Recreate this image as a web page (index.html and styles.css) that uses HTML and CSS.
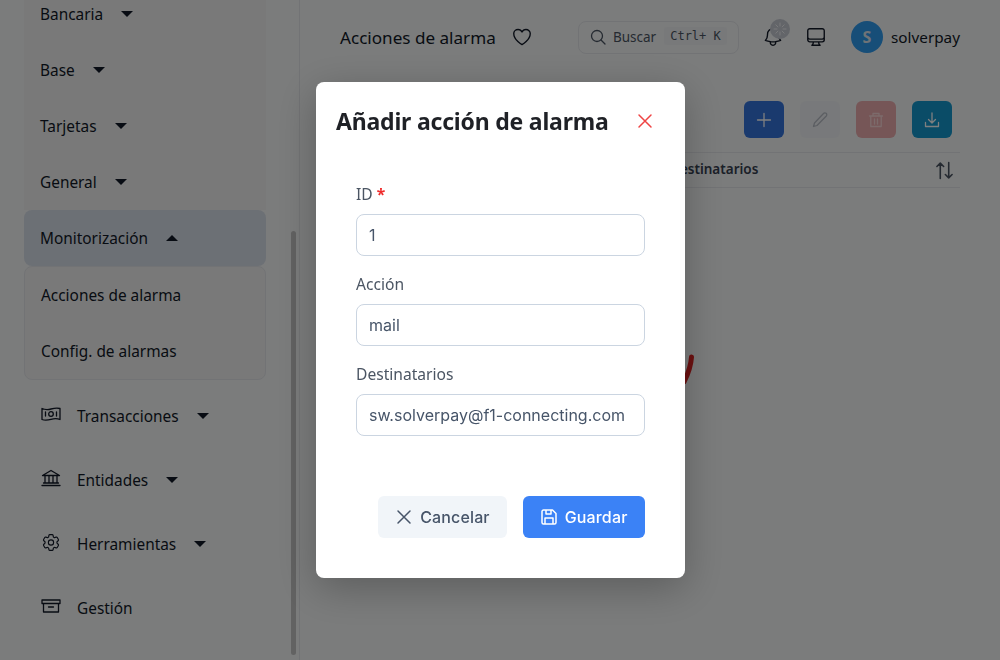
FILE: index.html
```html
<!DOCTYPE html>
<html lang="es">

<head>
    <meta charset="UTF-8">
    <meta name="viewport" content="width=device-width, initial-scale=1.0">
    <title>Acciones de alarma</title>
    <link rel="stylesheet" href="styles.css">
</head>

<body>
    <div class="app">
        <aside class="sidebar">
            <nav class="menu">
                <div class="menu-item"><span>Bancaria</span><i class="caret"></i></div>
                <div class="menu-item"><span>Base</span><i class="caret"></i></div>
                <div class="menu-item"><span>Tarjetas</span><i class="caret"></i></div>
                <div class="menu-item"><span>General</span><i class="caret"></i></div>
                <div class="menu-item active"><span>Monitorización</span><i class="caret up"></i></div>
                <div class="submenu">
                    <div class="submenu-item">Acciones de alarma</div>
                    <div class="submenu-item">Config. de alarmas</div>
                </div>
                <div class="menu-item big">
                    <svg class="menu-icon" viewBox="0 0 20 14">
                        <path d="M1 1.500c3 1.300 6 1.300 9 .5s6-1.300 9-.5v11c-3-1.300-6-1-9-.2s-6 1.200-9 .2z" />
                        <circle cx="10" cy="7" r="2.300" />
                        <path d="M4.500 5v4M15.500 5v4" />
                    </svg>
                    <span>Transacciones</span><i class="caret"></i>
                </div>
                <div class="menu-item big">
                    <svg class="menu-icon" viewBox="0 0 20 17">
                        <path d="M1.500 6 10 1l8.500 5zM4 6.500v7M8 6.500v7M12 6.500v7M16 6.500v7M2.500 13.500h15M1 16h18" />
                    </svg>
                    <span>Entidades</span><i class="caret"></i>
                </div>
                <div class="menu-item big">
                    <svg class="menu-icon gear" viewBox="0 0 24 24">
                        <path d="M9.594 3.940c.090-.542.560-.940 1.110-.940h2.593c.550 0 1.020.398 1.110.940l.213 1.281c.063.374.313.686.645.870.074.040.147.083.220.127.325.196.720.257 1.075.124l1.217-.456a1.125 1.125 0 0 1 1.370.490l1.296 2.247a1.125 1.125 0 0 1-.260 1.431l-1.003.827c-.293.241-.438.613-.430.992a7.723 7.723 0 0 1 0 .255c-.008.378.137.750.430.991l1.004.827c.424.350.534.955.260 1.430l-1.298 2.247a1.125 1.125 0 0 1-1.369.491l-1.217-.456c-.355-.133-.750-.072-1.076.124a6.470 6.470 0 0 1-.220.128c-.331.183-.581.495-.644.869l-.213 1.281c-.090.543-.560.940-1.110.940h-2.594c-.550 0-1.019-.398-1.110-.940l-.213-1.281c-.062-.374-.312-.686-.644-.870a6.520 6.520 0 0 1-.220-.127c-.325-.196-.720-.257-1.076-.124l-1.217.456a1.125 1.125 0 0 1-1.369-.490l-1.297-2.247a1.125 1.125 0 0 1 .260-1.431l1.004-.827c.292-.240.437-.613.430-.991a6.932 6.932 0 0 1 0-.255c.007-.380-.138-.751-.430-.992l-1.004-.827a1.125 1.125 0 0 1-.260-1.430l1.297-2.247a1.125 1.125 0 0 1 1.370-.491l1.216.456c.356.133.751.072 1.076-.124.072-.044.146-.086.220-.128.332-.183.582-.495.644-.869l.214-1.280Z" />
                        <circle cx="12" cy="12" r="3" />
                    </svg>
                    <span>Herramientas</span><i class="caret"></i>
                </div>
                <div class="menu-item big">
                    <svg class="menu-icon" viewBox="0 0 20 14">
                        <path d="M1 1h18v3.500H1zM2.500 4.500V13h15V4.500M7.500 8h5" />
                    </svg>
                    <span>Gestión</span>
                </div>
            </nav>
            <div class="scroll-thumb"></div>
        </aside>

        <main class="main">
            <header class="topbar">
                <div class="page-title">
                    <span>Acciones de alarma</span>
                    <svg class="heart" viewBox="0 0 24 24">
                        <path d="M21 8.250c0-2.485-2.099-4.500-4.688-4.500-1.935 0-3.597 1.126-4.312 2.733-.715-1.607-2.377-2.733-4.313-2.733C5.100 3.750 3 5.765 3 8.250c0 7.220 9 12 9 12s9-4.780 9-12Z" />
                    </svg>
                </div>
                <div class="search">
                    <svg class="search-icon" viewBox="0 0 16 16">
                        <circle cx="7" cy="7" r="5.500" />
                        <path d="m11 11 4 4" />
                    </svg>
                    <span>Buscar</span>
                    <kbd>Ctrl+ K</kbd>
                </div>
                <div class="bell">
                    <svg viewBox="0 0 24 24">
                        <path d="M14.857 17.082a23.848 23.848 0 0 0 5.454-1.310A8.967 8.967 0 0 1 18 9.750V9A6 6 0 0 0 6 9v.750a8.967 8.967 0 0 1-2.312 6.022c1.733.640 3.560 1.085 5.455 1.310m5.714 0a24.255 24.255 0 0 1-5.714 0m5.714 0a3 3 0 1 1-5.714 0" />
                    </svg>
                    <div class="badge">
                        <svg viewBox="0 0 20 20">
                            <path d="M10 4v3M10 13v3M4 10h3M13 10h3M5.800 5.800 7.900 7.900M12.100 12.100l2.100 2.100M14.200 5.800l-2.100 2.100M7.900 12.100l-2.100 2.100" />
                        </svg>
                    </div>
                </div>
                <svg class="monitor" viewBox="0 0 24 24">
                    <path d="M9 17.250v1.007a3 3 0 0 1-.879 2.122L7.500 21h9l-.621-.621A3 3 0 0 1 15 18.257V17.250m6-12V15a2.250 2.250 0 0 1-2.250 2.250H5.250A2.250 2.250 0 0 1 3 15V5.250m18 0A2.250 2.250 0 0 0 18.750 3H5.250A2.250 2.250 0 0 0 3 5.250m18 0V12a2.250 2.250 0 0 1-2.250 2.250H5.250A2.250 2.250 0 0 1 3 12V5.250" />
                </svg>
                <div class="user">
                    <div class="avatar">S</div>
                    <span>solverpay</span>
                </div>
            </header>

            <div class="toolbar">
                <button class="tool tool-add">
                    <svg viewBox="0 0 20 20"><path d="M10 3.500v13M3.500 10h13" /></svg>
                </button>
                <button class="tool tool-edit">
                    <svg viewBox="0 0 20 20"><path d="M13.500 3.500a1.800 1.800 0 0 1 2.800 2.500L7 15.500l-3.500 1 1-3.500z" /></svg>
                </button>
                <button class="tool tool-delete">
                    <svg viewBox="0 0 20 20"><path d="M3.500 6h13M7 6V3.500h6V6M4.800 6v10.500h10.400V6M8.500 9v5M11.500 9v5" /></svg>
                </button>
                <button class="tool tool-export">
                    <svg viewBox="0 0 20 20"><path d="M10 3v9.500M6.500 9.500l3.500 3.500 3.500-3.500M3.500 12.500v4h13v-4" /></svg>
                </button>
            </div>

            <div class="table-head">
                <span>ID</span>
                <span>Acción</span>
                <span>Destinatarios</span>
                <svg class="sort" viewBox="0 0 18 18">
                    <path d="M5 16.500V2M1.800 5.200 5 2l3.200 3.200M13 1.500V16M9.800 12.800 13 16l3.200-3.200" />
                </svg>
            </div>

            <svg class="empty-mark" viewBox="0 0 12 30">
                <path d="M8.500 3C8 10 6 18 1 28" />
            </svg>
        </main>
    </div>

    <div class="overlay">
        <div class="modal">
            <div class="modal-header">
                <h2>Añadir acción de alarma</h2>
                <svg class="close" viewBox="0 0 16 16"><path d="m2 2 12 12M14 2 2 14" /></svg>
            </div>
            <form class="modal-form">
                <label for="alarmId">ID <b>*</b></label>
                <input type="text" id="alarmId" value="1">

                <label for="alarmAction">Acción</label>
                <input type="text" id="alarmAction" value="mail">

                <label for="alarmTo">Destinatarios</label>
                <input type="text" id="alarmTo" value="sw.solverpay@f1-connecting.com">

                <div class="modal-footer">
                    <button type="button" class="btn btn-cancel">
                        <svg viewBox="0 0 20 20"><path d="m4 4 12 12M16 4 4 16" /></svg>
                        Cancelar
                    </button>
                    <button type="button" class="btn btn-save">
                        <svg viewBox="0 0 20 20"><path d="M3 4.500A1.500 1.500 0 0 1 4.500 3h9L17 6.500v9a1.500 1.500 0 0 1-1.500 1.500h-11A1.500 1.500 0 0 1 3 15.500zM7 3v4h5V3M6 17v-6h8v6" /></svg>
                        Guardar
                    </button>
                </div>
            </form>
        </div>
    </div>
</body>

</html>
```

FILE: styles.css
```css
* {
    box-sizing: border-box;
}

body {
    margin: 0;
    height: 660px;
    overflow: hidden;
    font-family: "Noto Sans", sans-serif;
    font-size: 16px;
    color: #1f2937;
    background-color: #f6f8f8;
}

svg {
    fill: none;
    stroke: currentColor;
    stroke-linecap: round;
    stroke-linejoin: round;
}

.app {
    display: flex;
    height: 660px;
}

/* sidebar */
.sidebar {
    position: relative;
    flex: 0 0 300px;
    height: 660px;
    overflow: hidden;
    font-size: 15.4px;
    border-right: 1px solid #e5e7eb;
}

.menu {
    margin-top: -14px;
    padding: 0 33px 0 24px;
}

.menu-item {
    display: flex;
    align-items: center;
    height: 56px;
    padding-left: 16px;
    color: #111827;
    background-color: #f2f3f3;
}

.menu-item.active {
    background-color: #d9e0ea;
    border-radius: 8px;
}

.menu-item.big {
    height: 64px;
    padding-left: 17px;
    background-color: transparent;
}

.menu-item.big:nth-child(7) {
    margin-top: 4px;
}

.caret {
    width: 0;
    height: 0;
    margin-left: 18px;
    border-left: 6px solid transparent;
    border-right: 6px solid transparent;
    border-top: 6px solid #111827;
}

.caret.up {
    border-top: 0;
    border-bottom: 6px solid #111827;
}

.menu-icon {
    width: 20px;
    height: 20px;
    margin-right: 16px;
    margin-top: -4px;
    stroke-width: 1.300;
}

.menu-icon.gear {
    width: 21px;
    height: 21px;
    margin-right: 15px;
    transform: translateX(-0.5px);
}

.submenu {
    height: 114px;
    background-color: #f2f3f3;
    border: 1px solid #e5e7eb;
    border-radius: 8px;
}

.submenu-item {
    display: flex;
    align-items: center;
    height: 56px;
    padding-left: 16px;
    color: #111827;
}

.scroll-thumb {
    position: absolute;
    left: 291px;
    top: 231px;
    width: 5px;
    height: 424px;
    background-color: #c4c4c4;
    border-radius: 3px;
}

/* main area */
.main {
    position: relative;
    flex: 1;
    min-width: 0;
    padding-right: 40px;
}

.topbar {
    display: flex;
    align-items: center;
    height: 74px;
    padding-left: 40px;
}

.page-title {
    display: flex;
    align-items: center;
    width: 238px;
    font-size: 17.1px;
    color: #111827;
}

.heart {
    width: 22px;
    height: 22px;
    margin-left: 15px;
    stroke-width: 1.500;
}

.search {
    display: flex;
    align-items: center;
    width: 161px;
    height: 33px;
    padding-left: 11px;
    font-size: 13.5px;
    color: #4b5563;
    border: 1px solid #e5e7eb;
    border-radius: 8px;
}

.search-icon {
    width: 16px;
    height: 16px;
    margin-right: 7px;
    stroke-width: 1.300;
}

kbd {
    margin-top: -2px;
    margin-left: 8px;
    padding: 2px 6px;
    font-family: "DejaVu Sans Mono", monospace;
    font-size: 12px;
    color: #4b5563;
    background-color: #f1f3f5;
    border-radius: 3px;
}

.bell {
    position: relative;
    width: 22px;
    height: 22px;
    margin-left: 23px;
    color: #111827;
}

.bell > svg {
    display: block;
    width: 22px;
    height: 22px;
    stroke-width: 1.500;
}

.badge {
    position: absolute;
    top: -7px;
    left: 8px;
    width: 20px;
    height: 20px;
    background-color: #c6cad3;
    border-radius: 50%;
}

.badge svg {
    display: block;
    width: 20px;
    height: 20px;
    stroke: #f3f4f6;
}

.monitor {
    width: 22px;
    height: 22px;
    margin-top: -1px;
    margin-left: 21px;
    color: #111827;
    stroke-width: 1.500;
}

.user {
    display: flex;
    align-items: center;
    margin-left: 24px;
    font-size: 15.3px;
    color: #111827;
}

.avatar {
    display: flex;
    align-items: center;
    justify-content: center;
    width: 32px;
    height: 32px;
    margin-right: 8px;
    font-size: 16px;
    font-weight: 700;
    color: #dfe7ee;
    background-color: #2f9cf0;
    border-radius: 50%;
}

.toolbar {
    display: flex;
    justify-content: flex-end;
    gap: 16px;
    padding: 27px 8px 0 0;
}

.tool {
    display: flex;
    align-items: center;
    justify-content: center;
    width: 40px;
    height: 37px;
    padding: 0;
    border: none;
    border-radius: 6px;
    color: #fff;
}

.tool svg {
    width: 20px;
    height: 20px;
    stroke-width: 1.300;
}

.tool-add {
    background-color: #3574dd;
}

.tool-edit {
    color: #b8bdc6;
    background-color: #f1f3f6;
}

.tool-delete {
    color: #f9d6d7;
    background-color: #ecadaf;
}

.tool-export {
    background-color: #1498cf;
}

.table-head {
    display: grid;
    grid-template-columns: 165px 165px 1fr 26px;
    align-items: center;
    height: 36px;
    margin-top: 14px;
    margin-left: 40px;
    font-size: 13.5px;
    font-weight: 600;
    color: #374151;
    border-top: 1px solid #e5e7eb;
    border-bottom: 1px solid #e5e7eb;
}

.table-head span {
    padding-bottom: 2px;
}

.sort {
    width: 19px;
    height: 19px;
    stroke-width: 1.500;
    color: #4b5563;
    transform: translateX(1px);
}

/* piece of the red message that sticks out behind the modal */
.empty-mark {
    position: absolute;
    left: 383px;
    top: 354px;
    width: 12px;
    height: 30px;
    color: #d92323;
    stroke-width: 5;
}

/* modal */
.overlay {
    position: fixed;
    top: 0;
    left: 0;
    display: flex;
    align-items: center;
    justify-content: center;
    width: 1000px;
    height: 660px;
    background-color: rgba(0, 0, 0, 0.5);
}

.modal {
    width: 369px;
    margin-left: 1px;
    padding: 20px 0 40px;
    background-color: #fff;
    border-radius: 8px;
    box-shadow: 0 10px 40px rgba(0, 0, 0, 0.25);
}

.modal-header {
    display: flex;
    align-items: center;
    justify-content: space-between;
    height: 38px;
    padding: 0 32px 0 20px;
}

.modal-header h2 {
    margin: 0;
    font-size: 23px;
    font-weight: 700;
    letter-spacing: -0.2px;
    color: #1f2126;
    white-space: nowrap;
}

.close {
    width: 16px;
    height: 16px;
    color: #ef4444;
    stroke-width: 1.500;
}

.modal-form {
    padding: 42px 40.5px 0 40px;
}

.modal-form label {
    display: block;
    height: 24px;
    margin-bottom: 8px;
    font-size: 15.6px;
    line-height: 24px;
    color: #4b5563;
}

.modal-form label b {
    color: #ef2b2b;
}

.modal-form input {
    display: block;
    width: 100%;
    height: 42px;
    margin-bottom: 16px;
    padding: 0 12px;
    font-family: "Inter", sans-serif;
    font-size: 16px;
    color: #475569;
    border: 1px solid #cbd5e1;
    border-radius: 8px;
    outline: none;
}

.modal-footer {
    display: flex;
    justify-content: flex-end;
    gap: 16px;
    margin-top: 60px;
}

.btn {
    display: flex;
    align-items: center;
    gap: 6px;
    height: 42px;
    padding: 0 17px 0 16px;
    font-family: "Inter", sans-serif;
    font-size: 16px;
    font-weight: 500;
    letter-spacing: 0.15px;
    border: none;
    border-radius: 6px;
}

.btn svg {
    width: 20px;
    height: 20px;
    stroke-width: 1.500;
}

.btn-cancel {
    color: #475569;
    background-color: #f1f5f9;
}

.btn-save {
    color: #fff;
    background-color: #3b82f6;
}
```
